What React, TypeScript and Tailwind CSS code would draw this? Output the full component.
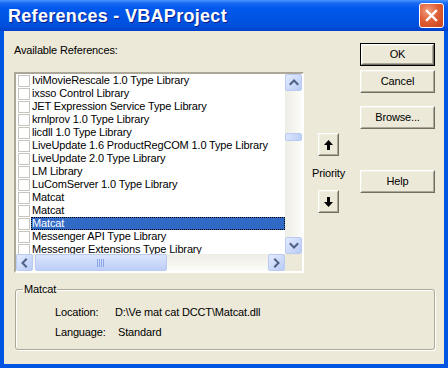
import React from "react";

const rows = [
  "IviMovieRescale 1.0 Type Library",
  "ixsso Control Library",
  "JET Expression Service Type Library",
  "krnlprov 1.0 Type Library",
  "licdll 1.0 Type Library",
  "LiveUpdate 1.6 ProductRegCOM 1.0 Type Library",
  "LiveUpdate 2.0 Type Library",
  "LM Library",
  "LuComServer 1.0 Type Library",
  "Matcat",
  "Matcat",
  "Matcat",
  "Messenger API Type Library",
  "Messenger Extensions Type Library",
];

function Chevron({ dir }: { dir: "up" | "down" | "left" | "right" }) {
  const d =
    dir === "up"
      ? "M1.5 6 L5 2.5 L8.5 6"
      : dir === "down"
      ? "M1.5 3 L5 6.5 L8.5 3"
      : dir === "left"
      ? "M6 1.5 L2.5 5 L6 8.5"
      : "M3 1.5 L6.5 5 L3 8.5";
  return (
    <svg width="10" height="10" viewBox="0 0 10 10">
      <path d={d} fill="none" stroke="#4d6185" strokeWidth="2" strokeLinecap="square" />
    </svg>
  );
}

function SBtn({ dir }: { dir: "up" | "down" | "left" | "right" }) {
  return (
    <div className="w-[17px] h-[17px] shrink-0 rounded-[2px] border border-[#b9cbf3] bg-gradient-to-br from-[#e3ebfe] to-[#b9cbf6] flex items-center justify-center">
      <Chevron dir={dir} />
    </div>
  );
}

function ClassicBtn({
  children,
  def,
  className = "",
}: {
  children: React.ReactNode;
  def?: boolean;
  className?: string;
}) {
  const inner = (
    <div className="w-full h-full border border-t-[#ffffff] border-l-[#ffffff] border-r-[#716f64] border-b-[#716f64] bg-[#ece9d8]">
      <div className="w-full h-full border border-t-[#f1efe2] border-l-[#f1efe2] border-r-[#aca899] border-b-[#aca899] flex items-center justify-center">
        {children}
      </div>
    </div>
  );
  return (
    <div className={`${className} ${def ? "border border-black" : ""}`}>{inner}</div>
  );
}

function Arrow({ up }: { up?: boolean }) {
  return (
    <svg width="9" height="10" viewBox="0 0 9 10">
      {up ? (
        <path d="M4.5 0 L9 5 L6 5 L6 10 L3 10 L3 5 L0 5 Z" fill="#000" />
      ) : (
        <path d="M4.5 10 L9 5 L6 5 L6 0 L3 0 L3 5 L0 5 Z" fill="#000" />
      )}
    </svg>
  );
}

export default function App() {
  return (
    <div
      className="w-[448px] h-[368px] flex flex-col bg-[#0054e3] overflow-hidden"
      style={{ fontFamily: '"Liberation Sans", Arial, sans-serif' }}
    >
      {/* Title bar */}
      <div className="h-[31px] shrink-0 flex items-center justify-between pl-[8px] pr-[4px] bg-[linear-gradient(to_bottom,#4c96ff_0px,#1a6bf2_3px,#0058ee_8px,#0054e3_18px,#0050dc_26px,#003fc9_31px)]">
        <span className="text-white font-bold text-[18px] leading-none tracking-[0.3px] [text-shadow:1px_1px_0_#0a1e8c]">
          References - VBAProject
        </span>
        <div className="w-[25px] h-[25px] rounded-[3px] border border-white bg-[radial-gradient(circle_at_35%_30%,#f0a080_0%,#e06038_45%,#c8401a_100%)] flex items-center justify-center">
          <svg width="13" height="13" viewBox="0 0 13 13">
            <path d="M2 2 L11 11 M11 2 L2 11" stroke="#fff" strokeWidth="2.4" strokeLinecap="square" />
          </svg>
        </div>
      </div>

      {/* Client area */}
      <div className="flex-1 mx-[4px] mb-[4px] bg-[#ece9d8] flex flex-col text-[11px] text-black leading-[13px] tracking-[-0.15px]">
        <div className="flex">
          {/* Left column */}
          <div className="ml-[10px] w-[290px] flex flex-col">
            <div className="mt-[13px] h-[13px]">Available References:</div>
            <div className="mt-[15px] h-[201px] border-2 border-t-[#aca899] border-l-[#aca899] border-r-[#ffffff] border-b-[#ffffff] bg-white flex flex-col">
              <div className="h-[180px] flex">
                <div className="flex-1 overflow-hidden">
                  {rows.map((r, i) => {
                    const sel = i === 11;
                    return (
                      <div key={i} className="h-[13px] flex items-center whitespace-nowrap">
                        <div className="ml-[2px] w-[12px] h-[12px] shrink-0 border border-[#c8c6bc] bg-white" />
                        <div
                          className={`ml-[1px] flex-1 h-[13px] pl-[1px] ${
                            sel ? "bg-[#316ac5] text-white outline-1 outline-dotted outline-[#000] -outline-offset-1" : ""
                          }`}
                        >
                          {r}
                        </div>
                      </div>
                    );
                  })}
                </div>
                <div className="w-[17px] flex flex-col bg-[linear-gradient(to_right,#eeede5,#fcfcf9)]">
                  <SBtn dir="up" />
                  <div className="h-[42px]" />
                  <div className="h-[8px] mx-0 rounded-[2px] border border-[#b9cbf3] bg-gradient-to-r from-[#dbe5fd] to-[#bccdf7]" />
                  <div className="flex-1" />
                  <SBtn dir="down" />
                </div>
              </div>
              <div className="h-[17px] flex">
                <div className="flex-1 flex bg-[linear-gradient(to_bottom,#eeede5,#fcfcf9)]">
                  <SBtn dir="left" />
                  <div className="ml-[2px] w-[132px] rounded-[2px] border border-[#b9cbf3] bg-gradient-to-b from-[#dbe5fd] to-[#bccdf7] flex items-center justify-center">
                    <svg width="8" height="8" viewBox="0 0 8 8">
                      <path d="M0.5 0 V8 M2.5 0 V8 M4.5 0 V8 M6.5 0 V8" stroke="#8aa6e6" strokeWidth="1" />
                    </svg>
                  </div>
                  <div className="flex-1" />
                  <SBtn dir="right" />
                </div>
                <div className="w-[17px] bg-[#ece9d8]" />
              </div>
            </div>
          </div>

          {/* Priority column */}
          <div className="ml-[8px] w-[33px] flex flex-col items-center">
            <ClassicBtn className="mt-[102px] w-[21px] h-[23px]">
              <Arrow up />
            </ClassicBtn>
            <div className="mt-[11px] h-[13px]">Priority</div>
            <ClassicBtn className="mt-[10px] w-[21px] h-[23px]">
              <Arrow />
            </ClassicBtn>
          </div>

          {/* Buttons column */}
          <div className="ml-[15px] w-[75px] flex flex-col">
            <ClassicBtn def className="mt-[12px] h-[23px]">OK</ClassicBtn>
            <ClassicBtn className="mt-[4px] h-[23px]">Cancel</ClassicBtn>
            <ClassicBtn className="mt-[13px] h-[23px]">Browse...</ClassicBtn>
            <ClassicBtn className="mt-[41px] h-[23px]">Help</ClassicBtn>
          </div>
        </div>

        {/* Group box */}
        <fieldset className="ml-[11px] mr-[9px] mt-[10px] h-[67px] border border-[#aca899] rounded-[3px] shadow-[inset_1px_1px_0_#fff,1px_1px_0_#fff] px-[7px]">
          <legend className="px-[1px]">Matcat</legend>
          <div className="mt-[10px] flex">
            <span className="ml-[32px] w-[60px]">Location:</span>
            <span>D:\Ve mat cat DCCT\Matcat.dll</span>
          </div>
          <div className="mt-[7px] flex">
            <span className="ml-[32px] w-[63px]">Language:</span>
            <span>Standard</span>
          </div>
        </fieldset>
      </div>
    </div>
  );
}
